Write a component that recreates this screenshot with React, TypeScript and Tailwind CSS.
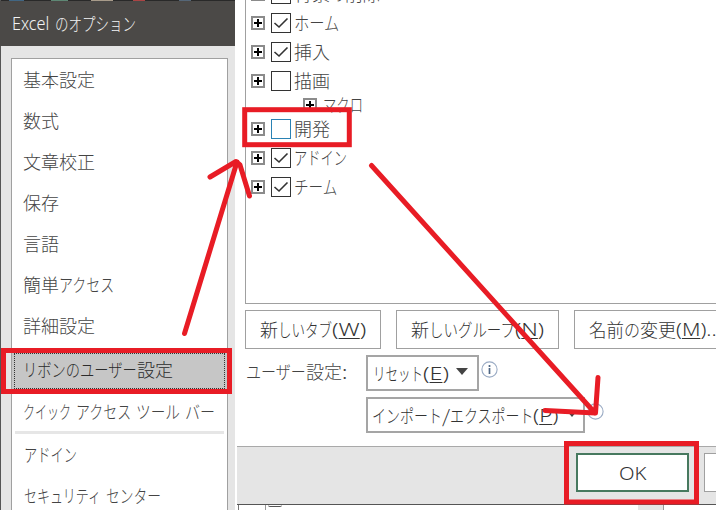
import { useLayoutEffect, useRef, useState } from 'react';
import type { ReactNode } from 'react';

// Text condensed or widened to the given width, like a proportional UI font.
function Fit({ w, children, className = '' }: { w: number; children: ReactNode; className?: string }) {
  const ref = useRef<HTMLSpanElement>(null);
  const [scale, setScale] = useState(1);
  useLayoutEffect(() => {
    if (ref.current) setScale(w / ref.current.offsetWidth);
  }, [w]);
  return (
    <span className={`block shrink-0 text-left whitespace-pre ${className}`} style={{ width: w }}>
      <span ref={ref} className="inline-block origin-left" style={{ transform: `scaleX(${scale})` }}>
        {children}
      </span>
    </span>
  );
}

type Part = [string, number];

// Kanji keep their full width while kana runs are set narrower.
function Parts({ parts }: { parts: Part[] }) {
  return (
    <span className="flex shrink-0">
      {parts.map(([t, w], i) => (
        <Fit key={i} w={w}>{t}</Fit>
      ))}
    </span>
  );
}

function Key({ w, k, after = '' }: { w: number; k: string; after?: string }) {
  return (
    <Fit w={w} className="font-['Noto_Sans',sans-serif]">
      (<u className="underline-offset-2">{k}</u>){after}
    </Fit>
  );
}

const topItems: Part[][] = [
  [['基本設定', 72]],
  [['数式', 36]],
  [['文章校正', 72]],
  [['保存', 36]],
  [['言語', 36]],
  [['簡単', 36], ['アクセス', 55]],
  [['詳細設定', 72]],
];

function Plus() {
  return (
    <svg className="block size-[14px] shrink-0" viewBox="0 0 14 14">
      <rect x="1" y="1" width="12" height="12" fill="#fff" stroke="#8b8b8b" strokeWidth="2" />
      <path d="M3 7h8M7 3v8" stroke="#000" strokeWidth="2" />
    </svg>
  );
}

function Row({ parts, checked, blue }: { parts: Part[]; checked?: boolean; blue?: boolean }) {
  return (
    <div className="flex h-[29px] shrink-0 items-center pl-[5px]">
      <Plus />
      <div className={`ml-[6px] mr-[3px] size-[20px] shrink-0 border bg-white ${blue ? 'border-[#2a82b4]' : 'border-[#333]'}`}>
        {checked && (
          <svg className="block size-[18px]" viewBox="0 0 18 18" fill="none" stroke="#333" strokeWidth="1.6">
            <path d="M2.500 9 7 13 15.500 4.500" />
          </svg>
        )}
      </div>
      <Parts parts={parts} />
    </div>
  );
}

function Info({ faded }: { faded?: boolean }) {
  return (
    <svg className="block size-[17px] shrink-0" viewBox="0 0 17 17" fill="none">
      <circle cx="8.5" cy="8.5" r="7.6" stroke="#9aabc4" strokeWidth="1.1" />
      {!faded && <path d="M8.5 7v6M8.5 4v2" stroke="#4f6785" strokeWidth="1.7" />}
    </svg>
  );
}

function Caret() {
  return (
    <svg className="block h-[7px] w-[12px] shrink-0" viewBox="0 0 12 7">
      <path d="M0 0h12L6 7z" fill="#444" />
    </svg>
  );
}

export default function App() {
  return (
    <div className="relative flex h-[510px] w-[716px] overflow-hidden bg-white font-['Noto_Sans_CJK_JP',sans-serif] text-[18px] leading-[27px] font-light text-[#444]">
      <aside className="flex w-[235px] shrink-0 flex-col border-l border-[#555] bg-[#e5e5e5]">
        <div className="flex h-[1px] shrink-0 bg-[#292929]">
          <i className="ml-[8px] w-[15px] bg-[#416683]" />
          <i className="ml-[27px] w-[17px] bg-[#5e8774]" />
          <i className="ml-[23px] w-[22px] bg-[#a89b8a]" />
          <i className="ml-[20px] w-[12px] bg-[#a44]" />
          <i className="ml-[34px] w-[12px] bg-[#567]" />
        </div>
        <header className="-ml-px flex h-[45px] shrink-0 items-center bg-[#4b4947] pl-[12px] text-[#f3f3f3]">
          <Fit w={37} className="font-['Noto_Sans',sans-serif]">Excel</Fit>
          <Fit w={81} className="ml-[6px]">のオプション</Fit>
        </header>
        <nav className="mt-[12px] ml-[10px] flex h-[470px] w-[217px] shrink-0 flex-col border border-[#a0a0a0] bg-white">
          {topItems.map((parts) => (
            <div key={parts[0][0]} className="flex h-[41px] shrink-0 items-center pl-[11px]">
              <Parts parts={parts} />
            </div>
          ))}
          <div className="mt-[5px] flex h-[40px] shrink-0 items-center bg-[#c6c6c6] p-[2px] text-[#2c2c2c]">
            <div className="flex h-full w-full items-center border border-dotted border-[#333] pb-[3px] pl-[8px]">
              <Parts parts={[['リボンのユーザー', 114], ['設定', 36]]} />
            </div>
          </div>
          <div className="flex h-[40px] shrink-0 items-center pl-[11px]">
            <Parts parts={[['クイック', 48], [' ', 5], ['アクセス', 55], [' ', 5], ['ツール', 44], [' ', 5], ['バー', 30]]} />
          </div>
          <div className="mx-[3px] h-[3px] shrink-0 bg-[#e6e6e6]" />
          <div className="flex h-[41px] shrink-0 items-center pl-[12px]">
            <Fit w={53}>アドイン</Fit>
          </div>
          <div className="flex h-[41px] shrink-0 items-center pl-[12px]">
            <Parts parts={[['セキュリティ', 77], [' ', 5], ['センター', 55]]} />
          </div>
        </nav>
      </aside>

      <main className="flex min-w-0 flex-1 flex-col">
        <section className="ml-[10px] flex h-[304px] shrink-0 flex-col overflow-hidden border-b border-l border-[#a0a0a0]">
          <div className="-mt-[21px] flex flex-col">
            <Row parts={[['背景', 36], ['の', 15], ['削除', 35]]} />
            <Row parts={[['ホーム', 45]]} checked />
            <Row parts={[['挿入', 36]]} checked />
            <Row parts={[['描画', 36]]} />
          </div>
          <div className="flex h-[19px] shrink-0 items-center pl-[57px]">
            <Plus />
            <Fit w={40} className="ml-[6px]">マクロ</Fit>
          </div>
          <Row parts={[['開発', 36]]} blue />
          <Row parts={[['アドイン', 53]]} checked />
          <Row parts={[['チーム', 43]]} checked />
        </section>

        <div className="mt-[6px] ml-[10px] flex h-[39px] shrink-0 gap-[15px] text-[#333]">
          <button className="flex w-[136px] shrink-0 items-center border border-[#a0a0a0] pl-[14px]">
            <Parts parts={[['新', 18], ['しいタブ', 54]]} />
            <Key w={34} k="W" />
          </button>
          <button className="flex w-[163px] shrink-0 items-center border border-[#a0a0a0] pl-[14px]">
            <Parts parts={[['新', 18], ['しいグループ', 86]]} />
            <Key w={29} k="N" />
          </button>
          <button className="flex w-[180px] shrink-0 items-center border border-[#a0a0a0] pl-[14px]">
            <Parts parts={[['名前', 35], ['の', 16], ['変更', 36]]} />
            <Key w={46} k="M" after="..." />
          </button>
        </div>

        <div className="mt-[6px] ml-[11px] flex h-[36px] shrink-0">
          <div className="mt-[3px] flex w-[102px] shrink-0">
            <Parts parts={[['ユーザー', 60], ['設定', 36], [':', 6]]} />
          </div>
          <button className="ml-[18px] flex w-[113px] shrink-0 items-center border-2 border-[#a5a5a5] pl-[5px] text-[#333]">
            <Fit w={50}>リセット</Fit>
            <Key w={26} k="E" />
            <span className="mb-[3px] ml-[7px]"><Caret /></span>
          </button>
          <span className="mt-[6px] ml-[2px]"><Info /></span>
        </div>
        <div className="mt-[6px] ml-[131px] flex h-[36px] shrink-0">
          <button className="flex w-[219px] shrink-0 items-center border-2 border-[#a5a5a5] pl-[4px] text-[#333]">
            <Parts parts={[['インポート', 70], ['/', 8], ['エクスポート', 83]]} />
            <Key w={26} k="P" />
            <span className="mb-[3px] ml-[7px]"><Caret /></span>
          </button>
          <span className="mt-[6px] ml-[2px]"><Info faded /></span>
        </div>

        <footer className="mt-[13px] ml-[2px] flex h-[59px] shrink-0 border-t border-b border-t-[#a9a9a9] border-b-[#555] bg-[#e5e5e5] pt-[6px] pl-[339px]">
          <button className="flex h-[39px] w-[113px] shrink-0 items-center justify-center border-2 border-[#47795f] bg-white pt-[2px] text-[#333]">
            <Fit w={27} className="font-['Noto_Sans',sans-serif]">OK</Fit>
          </button>
          <button className="ml-[15px] h-[39px] w-[113px] shrink-0 border border-[#a0a0a0] bg-white" />
        </footer>
        <div className="ml-[3px] flex h-[5px] shrink-0 overflow-hidden border-l border-[#777]">
          <div className="ml-[26px] flex w-[373px] shrink-0 border-l border-[#999]">
            <i className="ml-[2px] h-[2px] w-[14px] rounded-b border-b border-[#555]" />
            <Fit w={112} className="-mt-[23px] ml-[14px] h-[25px]">クイック解析</Fit>
          </div>
          <div className="h-full w-[25px] bg-[#e5e5e5]" />
          <div className="h-full w-px bg-[#999]" />
        </div>
      </main>

      <svg className="pointer-events-none absolute inset-0 h-[510px] w-[716px]" viewBox="0 0 716 510" fill="none" stroke="#e81c25" strokeWidth="5">
        <rect x="3.5" y="350.5" width="226" height="41" />
        <rect x="244.7" y="109.700" width="104.6" height="35" />
        <rect x="566.5" y="443.5" width="130" height="58.5" />
        <g strokeLinecap="round" strokeLinejoin="round">
          <path d="M184.500 333.500 237 162M210 177 236 161.500 240 165 249.500 196" />
          <path d="M371.500 165.500 595 413M598 377.500 595.500 413 545 410.500" />
        </g>
      </svg>
    </div>
  );
}
